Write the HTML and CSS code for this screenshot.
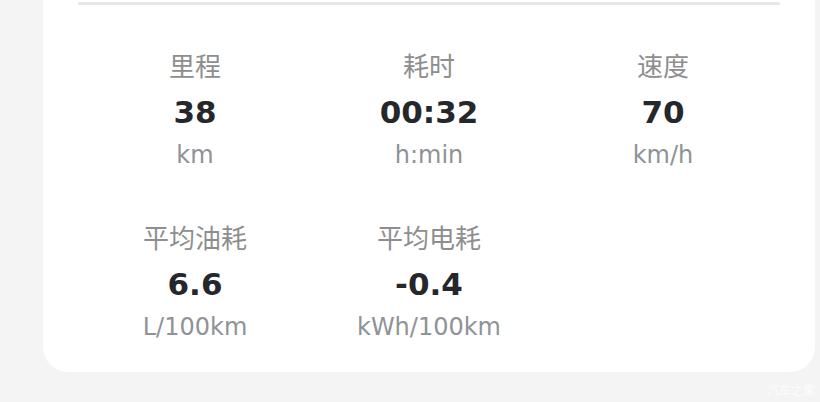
FILE: index.html
```html
<!DOCTYPE html>
<html lang="zh-CN">
<head>
    <meta charset="UTF-8">
    <meta name="viewport" content="width=device-width, initial-scale=1.0">
    <title>行程详情</title>
    <link rel="stylesheet" href="styles.css">
</head>
<body>

    <div class="trip-card">
        <div class="divider"></div>

        <div class="stats">
            <div class="stat">
                <div class="stat-label">里程</div>
                <div class="stat-value">38</div>
                <div class="stat-unit">km</div>
            </div>
            <div class="stat">
                <div class="stat-label">耗时</div>
                <div class="stat-value">00:32</div>
                <div class="stat-unit">h:min</div>
            </div>
            <div class="stat">
                <div class="stat-label">速度</div>
                <div class="stat-value">70</div>
                <div class="stat-unit">km/h</div>
            </div>
            <div class="stat">
                <div class="stat-label">平均油耗</div>
                <div class="stat-value">6.6</div>
                <div class="stat-unit">L/100km</div>
            </div>
            <div class="stat">
                <div class="stat-label">平均电耗</div>
                <div class="stat-value">-0.4</div>
                <div class="stat-unit">kWh/100km</div>
            </div>
        </div>
    </div>

    <div class="watermark">汽车之家</div>

</body>
</html>
```

FILE: styles.css
```css
body {
    margin: 0;
    padding: 0;
    background-color: #f4f4f4;
    font-family: 'DejaVu Sans', sans-serif;
    height: 402px;
    overflow: hidden;
    position: relative;
}
.trip-card {
    margin: 0 5px 0 43px;
    padding: 2px 35px 28px;
    background-color: #fff;
    border-radius: 0 0 25px 25px;
}
.divider {
    height: 3px;
    background-color: #e6e6e6;
    border-radius: 2px;
}
.stats {
    display: grid;
    grid-template-columns: repeat(3, 1fr);
    row-gap: 48px;
    margin-top: 43px;
}
.stat {
    text-align: center;
}
.stat-label {
    font-family: 'Noto Sans CJK SC', sans-serif;
    font-size: 26px;
    line-height: 34px;
    color: #8e8e8e;
}
.stat-value {
    margin-top: 10px;
    font-size: 31px;
    line-height: 40px;
    font-weight: bold;
    color: #25272b;
}
.stat-unit {
    margin-top: 6px;
    font-size: 24px;
    line-height: 34px;
    color: #8f9296;
}
.watermark {
    position: absolute;
    right: 5px;
    bottom: 4px;
    font-family: 'Noto Sans CJK SC', sans-serif;
    font-size: 12px;
    line-height: 16px;
    color: rgba(255, 255, 255, 0.85);
}
```
